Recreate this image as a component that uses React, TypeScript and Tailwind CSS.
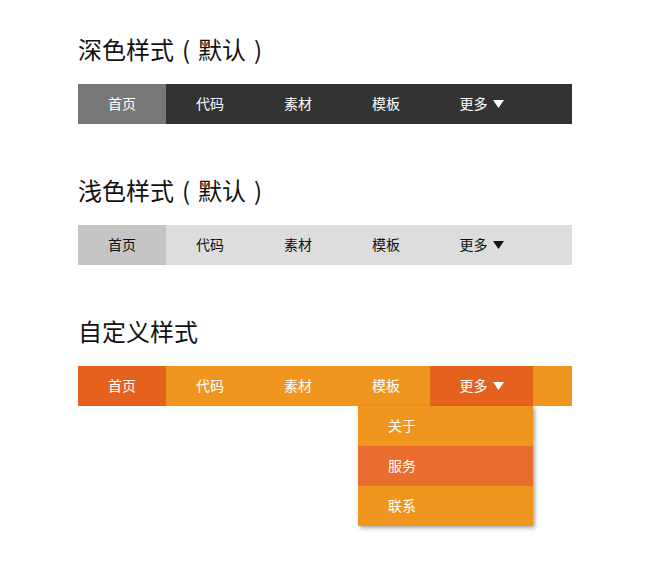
import React from "react";

const items = ["首页", "代码", "素材", "模板"];

function Tri({ color }: { color: string }) {
  return (
    <svg width="11" height="8" viewBox="0 0 11 8" className="ml-[5px]">
      <polygon points="0,0 11,0 5.5,8" fill={color} />
    </svg>
  );
}

function Paren({ c }: { c: string }) {
  return <span className="inline-block w-[24px] text-center">{c}</span>;
}

function Heading({ main, paren }: { main: string; paren?: string }) {
  return (
    <h2 className="flex h-8 items-center pb-[3px] text-[24px] leading-8 text-[#111]">
      <span>{main}</span>
      {paren && (
        <>
          <Paren c="(" />
          <span>{paren}</span>
          <Paren c=")" />
        </>
      )}
    </h2>
  );
}

function Bar({
  bg,
  active,
  text,
  moreBg,
  tri,
  children,
}: {
  bg: string;
  active: string;
  text: string;
  moreBg?: string;
  tri: string;
  children?: React.ReactNode;
}) {
  return (
    <div className={`relative flex h-10 w-[494px] ${bg} ${text} text-[14px]`}>
      {items.map((t, i) => (
        <div
          key={t}
          className={`flex h-10 w-[88px] items-center justify-center pb-[2px] ${i === 0 ? active : ""}`}
        >
          {t}
        </div>
      ))}
      <div className={`relative flex h-10 w-[103px] items-center justify-center ${moreBg ?? ""}`}>
        <span className="pb-[2px]">更多</span>
        <Tri color={tri} />
        {children}
      </div>
    </div>
  );
}

export default function App() {
  return (
    <div
      className="min-h-[575px] w-[650px] bg-white pl-[78px] pt-[34px]"
      style={{ fontFamily: '"Noto Sans CJK SC", "Noto Sans", sans-serif' }}
    >
      <Heading main="深色样式" paren="默认" />
      <div className="mt-[18px]">
        <Bar bg="bg-[#333333]" active="bg-[#777777]" text="text-white" tri="#ffffff" />
      </div>
      <div className="mt-[51px]">
        <Heading main="浅色样式" paren="默认" />
      </div>
      <div className="mt-[18px]">
        <Bar bg="bg-[#dddddd]" active="bg-[#c5c5c5]" text="text-[#111]" tri="#111111" />
      </div>
      <div className="mt-[51px]">
        <Heading main="自定义样式" />
      </div>
      <div className="mt-[18px]">
        <Bar
          bg="bg-[#f0961e]"
          active="bg-[#e5621e]"
          text="text-white"
          moreBg="bg-[#e5621e]"
          tri="#ffffff"
        >
          <div className="absolute right-0 top-10 z-10 w-[175px] bg-[#f0961e] text-white shadow-[2px_2px_4px_rgba(0,0,0,0.35)]">
            <div className="flex h-10 items-center pb-[2px] pl-[30px]">关于</div>
            <div className="flex h-10 items-center bg-[#e96d2f] pb-[2px] pl-[30px]">服务</div>
            <div className="flex h-10 items-center pb-[2px] pl-[30px]">联系</div>
          </div>
        </Bar>
      </div>
    </div>
  );
}
